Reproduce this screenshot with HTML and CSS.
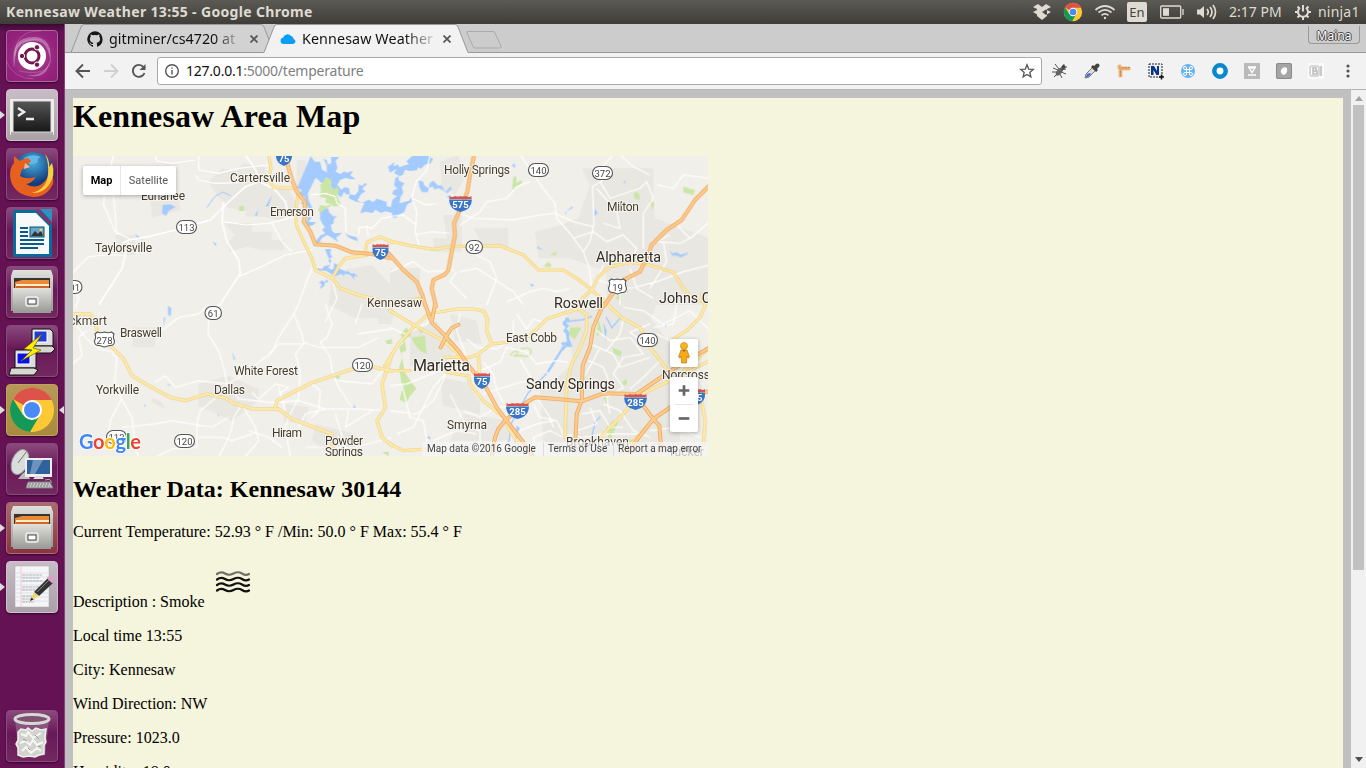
FILE: index.html
```html
<!DOCTYPE html>
<html lang="en">
<head>
<meta charset="utf-8">
<title>Kennesaw Weather 13:55</title>
<link rel="stylesheet" href="styles.css">
</head>
<body>
<div class="desktop">
<header class="panel">
  <span class="panel-title">Kennesaw Weather 13:55 - Google Chrome</span>
  <div class="indicators">
    <svg class="ind" style="width:18px" viewBox="0 0 18 18" fill="#dfdbd2"><path d="M5 1L9 4 5 6.500 0 4zM13 1l5 3-5 2.500L9 4zM0 9l5-2.500L9 9l-4 3zM18 9l-5-2.500L9 9l4 3zM4 4h10v9l-5 4-5-4z"/></svg>
    <svg class="ind" style="width:20px;height:20px" viewBox="0 0 48 48"><use href="#chrome" x="-2" y="-2"/></svg>
    <svg class="ind" style="width:20px" viewBox="0 0 20 18" fill="none" stroke="#dfdbd2" stroke-width="1.700"><path d="M.500 7Q10-1 19.500 7M3.500 9.500q6.500-5.200 13 0M6.500 12.300q3.500-2.700 7 0"/><circle cx="10" cy="15" r="1.200" fill="#dfdbd2" stroke="none"/></svg>
    <span class="lang">En</span>
    <svg class="ind" style="width:24px" viewBox="0 0 24 14" fill="none" stroke="#dfdbd2" stroke-width="1.300"><rect x=".700" y="1" width="20" height="12" rx="1"/><path d="M23 4v6"/><rect x="3" y="3.200" width="6" height="7.600" fill="#dfdbd2" stroke="none"/></svg>
    <svg class="ind" style="width:21px" viewBox="0 0 21 18" fill="none" stroke="#dfdbd2" stroke-width="1.700"><path d="M1 6.500h3L8 3v12l-4-3.500H1z" fill="#dfdbd2" stroke="none"/><path d="M11 6q2.500 3 0 6M14 4q4 5 0 10M17 2q5 7 0 14"/></svg>
    <span class="clock">2:17 PM</span>
    <svg class="ind" style="width:16px" viewBox="0 0 16 16" fill="none" stroke="#dfdbd2"><path d="M5 3.800A5 5 0 1 0 11 3.800" stroke-width="2"/><path d="M8 1v6.500M0 8h3M13 8h3M2.500 13.500L4.500 11.500M13.500 13.500l-2-2M8 13v3M2.500 2.500L4.500 4.500M13.500 2.500L11.500 4.500" stroke-width="2"/></svg>
    <span class="user">ninja1</span>
  </div>
</header>
<div class="workspace">
<nav class="launcher">
  <div class="tile dash"><svg viewBox="0 0 52 52"><g fill="none" stroke="#fff" opacity=".18"><path d="M8 37Q4 6 35 10M13 41Q52 49 43 18M0 31q8 18 28 18M9 26Q9 0 35 1"/></g><path d="M9 36Q2 6 30 7q16 2 14 22Q40 3 16 14 8 20 9 36M20 45q20 2 24-16-2 22-24 16" fill="#fff" opacity=".3"/><circle cx="26" cy="26" r="14" fill="#fff"/><circle cx="26" cy="26" r="7" fill="none" stroke="#77164e" stroke-width="3"/><g fill="#77164e" stroke="#fff" stroke-width="1"><circle cx="16" cy="26" r="2.700"/><circle cx="31" cy="17.300" r="2.700"/><circle cx="31" cy="34.700" r="2.700"/></g></svg></div>
  <div class="tile light running"><svg viewBox="0 0 52 52"><rect x="4" y="10" width="44" height="36" rx="1" fill="#f0f0eb"/><path d="M5 43h42v3H5z" fill="#aaa"/><rect x="7" y="12" width="38" height="31" fill="url(#screen)" stroke="#ddd"/><path d="M12 19l6 4-6 4M20 30h8" fill="none" stroke="#eee" stroke-width="2.500"/></svg></div>
  <div class="tile"><svg viewBox="0 0 52 52"><circle cx="27" cy="25" r="21" fill="url(#globe)"/><path d="M18 10q8-5 17-1-5 2-3 5-9 6-14-4" fill="#63b9e6"/><path d="M8 8l6 5q5-3 8-3l3 3-4 4q-1 3-5 4l-2 7q6 4 16 1-5 7-10 7 10 6 18-2 5-5 4-10 7 4 5 12-6 13-20 13Q5 46 4 27q0-8 4-12z" fill="#e6601f"/><path d="M39 6q5 6 4 13l3-4q4 12-3 22-7 9-17 8 15-4 16-19 1-11-3-20" fill="#f8ce3e"/><path d="M19 15l5 4-6 2z" fill="#f2ba9a"/></svg></div>
  <div class="tile"><svg viewBox="0 0 52 52"><path d="M7 3h29l10 10v37H7z" fill="#086a9d"/><path d="M34 2h12v13z" fill="#3191bc"/><path d="M10 6h20l13 13v28H10z" fill="#f7f8f8"/><path d="M31 3l14 14" stroke="#8b3266" stroke-width="3"/><path d="M14 21h8M14 25h8M14 29h8M14 33h24M14 37h24M14 41h18" stroke="#0a5b88" stroke-width="2"/><rect x="24" y="20" width="14" height="10" fill="#66a9cc" stroke="#075078"/><path d="M25 29l4-5 3 3 3-4 2 6z" fill="#333"/><circle cx="35" cy="23" r="1.500" fill="#ffd33a"/></svg></div>
  <div class="tile"><svg viewBox="0 0 52 52"><use href="#drawer"/></svg></div>
  <div class="tile"><svg viewBox="0 0 52 52"><path d="M26 4h18l3 3v14H26z" fill="#ddd" stroke="#111"/><path d="M28 6h13v11H28z" fill="#223bd9" stroke="#fff"/><path d="M25 21h21l3 3-4 4H25z" fill="#d7d7d1" stroke="#111"/><path d="M9 25h18l3 3v15H9z" fill="#ddd" stroke="#111"/><path d="M11 28h13v11H11z" fill="#0712ee" stroke="#fff"/><path d="M5 43h23l4 2-4 5H3z" fill="#d7d7d1" stroke="#111"/><path d="M36 9L18 24l8 1-11 11 20-11-8-2z" fill="#ffef00" stroke="#665e00" stroke-width=".700"/></svg></div>
  <div class="tile gold running active"><svg viewBox="0 0 52 52"><g id="chrome" transform="translate(2 2)"><circle cx="24" cy="24" r="22" fill="#fcc934"/><path d="M24 24L5 13A22 22 0 0 1 44 14H24z" fill="#dd5349"/><path d="M5 13A22 22 0 0 0 22 46l10-17-8-5-9 5z" fill="#149958"/><circle cx="24" cy="24" r="10" fill="#fff"/><circle cx="24" cy="24" r="8" fill="#4a8af4"/></g></svg></div>
  <div class="tile"><svg viewBox="0 0 52 52"><path d="M16 31l-4 5h12l-4-8" fill="#b9c0bc"/><ellipse cx="14" cy="19" rx="8" ry="13" transform="rotate(22 14 19)" fill="#d9dedb" stroke="#9a9f9b"/><path d="M12 20L21 8" stroke="#777"/><rect x="19" y="15" width="27" height="19" fill="#eee"/><rect x="21" y="17" width="23" height="14" fill="#2f629d"/><path d="M27 17h10l-8 14h-5z" fill="#6d92bd"/><path d="M30 33h6l2 3H27z" fill="#ddd"/><path d="M22 39h22l3 6H20z" fill="#c5cbc8" stroke="#777"/><path d="M23 41h20M22 43h22" stroke="#777" stroke-dasharray="2 1"/><path d="M39 37q7-2 6 3" fill="none" stroke="#aaa"/></svg></div>
  <div class="tile red running"><svg viewBox="0 0 52 52"><g id="drawer"><path d="M7 4h38l2 6v35H5V10z" fill="url(#metal)"/><path d="M8 12h36v12H8z" fill="#353535"/><path d="M9 16l7-2h27v9H9z" fill="#ed8932"/><path d="M10 18h33v2H10z" fill="#fff0ca"/><path d="M10 20h33v3H10z" fill="#d4642b"/><path d="M7 22h38v25H7z" fill="url(#metal)"/><rect x="20" y="31" width="12" height="9" rx="2" fill="#bbb" stroke="#eee" stroke-width="1.500"/><rect x="22" y="33" width="8" height="5" fill="#fff" stroke="#555"/></g></svg></div>
  <div class="tile light running"><svg viewBox="0 0 52 52"><path d="M9 5h34v41H9z" fill="#f5f5f5" stroke="#aaa" stroke-width=".500"/><path d="M10 12h32M10 16h32M10 20h32M10 24h32M10 28h32M10 32h32M10 36h32M10 40h32" stroke="#bfd2e8" stroke-width=".500"/><path d="M15 5v41" stroke="#f2c9d0"/><path d="M16 14h20M16 17h18M16 20h21M16 26h18M16 29h16M16 35h15M16 38h13M16 41h12" stroke="#888" stroke-dasharray="3 .500" stroke-width=".600"/><path d="M28 31l14-14 5 5-14 13z" fill="#333"/><path d="M31 31l12-12" stroke="#888"/><path d="M24 40l4-9 5 4z" fill="#ead878"/><path d="M24 40l1.500-3.500 2 2z" fill="#222"/><path d="M42 17l3-2 3 3-2 3z" fill="#dba0c7" stroke="#dba0c7" stroke-width="2"/></svg></div>
  <div class="tile trash"><svg viewBox="0 0 52 52"><path d="M9 10h34l-4 35q-13 4-26 0z" fill="#9b7894" opacity=".55"/><path d="M12 22l3-3 5 1 2-2 4 3 4-3 5 2 5-1-1 9 1 4-2 3v9l-5 1-4 2-6-1-6 1-5-2v-7l-2-4 2-4z" fill="#d2d2cf" stroke="#f0f0ed" stroke-width="1.500"/><path d="M15 24l5 2 2-4 5 6 8-5M14 33l6-2 4 4 3-5 4 5 6-3M16 41l4-4 5 6 6-5 4 3" stroke="#f6f6f4" fill="none" stroke-width="2"/><path d="M17 29l4 2M29 25l4 4M22 38l2 2M32 36l3 1" stroke="#999"/><ellipse cx="26" cy="9" rx="17" ry="4.500" fill="#7d5171" stroke="#d8d8d3" stroke-width="3"/></svg></div>
</nav>
<main class="browser">
  <div class="tabs">
    <svg class="tab-shapes" viewBox="65 24 1301 29"><path d="M71 52.500L81 27q1-2.500 3-2.500h177q2 0 3 2.500l10 25.500z" fill="#d2d2d2" stroke="#999"/><path d="M65 52.500h1301" stroke="#999"/><path d="M264 52.500L274 27q1-2.500 3-2.500h178q2 0 3 2.500l10 25.500V54H264z" fill="#f2f2f2"/><path d="M264 52.500L274 27q1-2.500 3-2.500h178q2 0 3 2.500l10 25.500" fill="none" stroke="#999"/><path d="M468 31.500h25q1.500 0 2 1.500l6 13q.500 2-1.500 2H475q-1.500 0-2-1.500L467 33q-.500-1.500 1-1.500z" fill="#ccc" stroke="#aaa"/></svg>
    <svg class="favicon" viewBox="0 0 16 16"><path d="M8 .300a8 8 0 0 0-2.500 15.500c.400.100.500-.200.500-.400V14c-2 .500-2.700-.900-2.700-.900-.300-.900-.800-1.200-.800-1.200-.700-.500 0-.500 0-.500.800.100 1.200.800 1.200.800.700 1.200 1.800.900 2.300.700 0-.500.300-.900.500-1.100-1.800-.200-3.600-.900-3.600-4 0-.800.300-1.600.800-2.100 0-.300-.400-1.100.100-2.200 0 0 .700-.200 2.200.800a8 8 0 0 1 4 0c1.500-1 2.200-.800 2.200-.800.500 1.100.100 1.900.100 2.200.500.500.800 1.300.800 2.100 0 3.100-1.900 3.800-3.700 4 .300.200.600.700.600 1.500v2c0 .300.100.500.500.400A8 8 0 0 0 8 .300z" fill="#181616"/></svg>
    <span class="tab-name first">gitminer/cs4720 at</span><svg class="close" viewBox="0 0 8 8"><path d="M.500.500l7 7M7.500.500l-7 7"/></svg>
    <svg class="favicon cloud" viewBox="0 0 16 16"><path d="M3.500 13a3.300 3.300 0 0 1-.300-6.500A4.500 4.500 0 0 1 11 5q2.400.300 2.600 3 1.900.700 1.900 2.600T13 13z" fill="#089ff5"/></svg>
    <span class="tab-name second">Kennesaw Weather</span><svg class="close" viewBox="0 0 8 8"><path d="M.500.500l7 7M7.500.500l-7 7"/></svg>
    <span class="profile">Maina</span>
  </div>
  <div class="toolbar">
    <svg class="nav-icon" viewBox="0 0 16 16"><path d="M15 8H2M8 1.500L1.500 8 8 14.500"/></svg>
    <svg class="nav-icon dim" viewBox="0 0 16 16"><path d="M1 8h13M8 1.500L14.500 8 8 14.500"/></svg>
    <svg class="nav-icon" viewBox="0 0 16 16"><path d="M13.500 10A6 6 0 1 1 12.500 4L14 5.500"/><path d="M14.500 1v6h-6z" fill="#555" stroke="none"/></svg>
    <div class="address"><svg class="info" viewBox="0 0 14 14"><circle cx="7" cy="7" r="6.300"/><path d="M7 6v4.500M7 3.500v1.300"/></svg><span class="url"><b>127.0.0.1</b>:5000/temperature</span><svg class="star" viewBox="0 0 16 16"><path d="M8 1.800l1.700 4.300 4.600.300-3.500 3 1.100 4.500L8 11.400l-3.900 2.500 1.100-4.500-3.500-3 4.600-.300z"/></svg></div>
    <div class="extensions">
      <svg viewBox="0 0 16 16"><ellipse cx="7.500" cy="8.500" rx="2.500" ry="5" transform="rotate(38 7.500 8.500)" fill="#666"/><path d="M1 5l5 2M3 1l4 5M0 9l5 0M2 14l3-3M14 6l-5 1M14 11l-5-2M10 15L8 11M11 5l1-4M11 4l4 0" stroke="#555"/><circle cx="11.500" cy="4" r="2" fill="#444"/></svg>
      <svg viewBox="0 0 16 16"><path d="M1 15l1-4 7-7 3 3-7 7z" fill="#ddd" stroke="#777"/><path d="M2 14l1-3 3-1 1 1-3 3z" fill="#4169df"/><path d="M8 3l5 5" stroke="#333" stroke-width="2.500"/><path d="M11 5l2.500-2.500" stroke="#444" stroke-width="4" stroke-linecap="round"/></svg>
      <svg viewBox="0 0 16 16"><path d="M2 2h3v2h9v3H6v7H3V6H2z" fill="#e4a56d" stroke="#f0bf8e"/><path d="M7 4v1m3-1v1m3-1v1M4 9h1m-1 3h1" stroke="#a76738"/></svg>
      <svg viewBox="0 0 16 16"><rect x="1" y="1" width="13" height="13" fill="#eee" stroke="#222" stroke-dasharray="2 1"/><path d="M3 12V3h3l3 5V3h2v9H8.500L5.500 7v5z" fill="#063688"/><path d="M11 14h5m-2.500-2.500v5" stroke="#111" stroke-width="1.500"/></svg>
      <svg viewBox="0 0 16 16"><circle cx="8" cy="8" r="7" fill="#67b5ec"/><path d="M6.500 6.500h3v3h-3zM6.500 6.500H5A1.500 1.500 0 1 1 6.500 5zM9.500 6.500V5A1.500 1.500 0 1 1 11 6.500zM9.500 9.500H11A1.500 1.500 0 1 1 9.500 11zM6.500 9.500V11A1.500 1.500 0 1 1 5 9.500z" fill="none" stroke="#fff"/></svg>
      <svg viewBox="0 0 16 16"><circle cx="8" cy="8" r="5.700" fill="#fff" stroke="#0888ce" stroke-width="4.500"/></svg>
      <svg viewBox="0 0 16 16"><path d="M0 0h16v16H0z" fill="#bababa"/><path d="M4 4h8M4 12h8M5 5h6L8 9.500z" fill="none" stroke="#fff" stroke-width="1.300"/></svg>
      <svg viewBox="0 0 16 16"><rect width="16" height="16" rx="2" fill="#898989"/><rect x="1" y="1" width="14" height="14" rx="2" fill="#a5a5a5"/><path d="M5 7q2-4 6-2 1 5-3 7-4-1-3-5z" fill="#fff"/></svg>
      <svg viewBox="0 0 16 16"><path d="M0 0h16v16H0z" fill="#fafafa"/><rect x="2" y="3" width="9" height="10" rx="2" fill="none" stroke="#ccc" stroke-width="1.500"/><path d="M5 5h3v3H5zm0 3h4v3H5zM13 3v10" fill="none" stroke="#bbb" stroke-width="1.500"/></svg>
      <svg class="more" viewBox="0 0 16 16" fill="#555"><circle cx="8" cy="3" r="1.600"/><circle cx="8" cy="8" r="1.600"/><circle cx="8" cy="13" r="1.600"/></svg>
    </div>
  </div>
  <div class="viewport">
    <article class="page">
      <h1>Kennesaw Area Map</h1>
      <div class="map">
        <svg class="map-art" viewBox="0 0 635 300">
        <defs>
          <linearGradient id="screen" x2="0" y2="1"><stop stop-color="#565656"/><stop offset="1" stop-color="#171717"/></linearGradient>
          <linearGradient id="metal" x2="0" y2="1"><stop stop-color="#e0e0dd"/><stop offset="1" stop-color="#989894"/></linearGradient>
          <radialGradient id="globe" cy=".25"><stop stop-color="#4ab0df"/><stop offset="1" stop-color="#133c7f"/></radialGradient>
          <g id="yellow">
            <path d="M590 0L597 40 590 75 605 97 665 100M678 115L670 180 675 215 700 270 720 310 730 345 780 370 805 400 860 420 960 445M780 370L800 335 820 310 885 300M880 290L885 262 925 245 960 262"/>
            <path transform="translate(954 0)" d="M-5 257L60 272 130 283 180 275 330 272 400 300 445 345 520 345 560 370 605 405 655 450M555 450L605 405 625 365 660 335 720 322 770 328 850 352 880 400 905 430 940 440M0 450L90 430"/>
            <path transform="translate(0 447)" d="M0 30L55 30 68 50 75 80 120 130 155 165 180 215 230 245 295 280 340 290 405 270 460 282 485 298 545 315 620 315 660 345 780 390 785 470M608 315L615 290 715 238 840 195M905 190L960 200M960 150L930 240 940 310 915 350 930 400 960 425"/>
            <path transform="translate(954 447)" d="M0 20L75 65 160 110 220 165M-15 185L25 120 75 65 115 30 200 15 250 15 282 22 292 45 290 80 305 120 350 115 420 95 470 45 530 25 565 15 590 30 590 80 570 130 545 180 530 240 525 400M-5 200L60 200M165 160L240 160 265 150 305 120M265 150L268 205M170 205L235 215 240 240 280 290 340 340 360 380 385 420M650 0L700 45 750 70 780 130 830 195M935-30L945 5 930 40 890 80 850 105M625 405L700 330 745 275 840 230 960 170M870 210L960 130M0 420L40 440 110 435M930 260L945 350 940 420M690 459L740 400 790 345"/>
          </g>
          <g id="orange">
            <path d="M640 0L650 40 660 75 675 110 698 140 700 180 695 200 715 230 730 268 790 272 840 292 900 297 955 310"/>
            <path transform="translate(954 0)" d="M-4 295L40 345 80 380 97 420 105 450M252 0L240 60 232 110 205 175 192 205 195 240 185 290 175 345 165 358 130 375 125 400 138 455M960 90L915 135 875 195 830 225 785 270 770 310 750 350 700 375 665 420 640 455"/>
            <path transform="translate(954 447)" d="M105 0L125 55 165 95 205 140 240 190 285 245 320 310 350 350 400 415 430 460M135 0L125 55M205 62L185 72 170 95 152 130M305 459L315 400 325 375 345 350 375 325 410 295 435 280 500 285 575 292 640 268 740 270 850 195 960 130M640 0L610 70 600 130 578 185 575 290 560 330 555 430M720 270L760 305 790 345 808 365 814 440M715 440L790 345 870 290 960 260"/>
          </g>
        </defs>
        <path d="M0 0h635v300H0z" fill="#f0efea"/>
        <g transform="scale(.333333) translate(-3 -3)">
          <g class="urban">
            <path d="M410 80l40-40 40 8 28-25 62 15 5 60 65 5 30 55-60 40-90-30-60-8-40-45zM675 15h25l15 60-22 50-20-15zM515 135l80 0 8 50-80 0zM455 205h85v25h60v25h35v30h-65l-45-10-55 15v-30l20-20zM235 135l85-10 5 40-85 25zM780 350l120-20 65 70v90H850l-80-40zM130 240h60v60h-50z"/>
            <path transform="translate(954 0)" d="M160 180h55v110h-85v-40h40zM575 40h215v90l5 60 165 60v200H800l-40 90-110-60V350l-110-40h-95l-10-80 80-20 50-20 35-100zM250 220h105v60h-70zM0 340h90v110H0zM150 20l55-20 20 70-30 50-40-25z"/>
            <path transform="translate(0 447)" d="M182 70h68v60h-68zM380 240l90-25 90 40 0 35-80 60-100-45zM730 360l120 30 10 50-80 19-60-50zM640 300l70 10-10 45-65 0zM920 0h40v60h-40zM240 280l30 15 10 20-40-20z"/>
            <path transform="translate(954 447)" d="M530 30L630 0h120l60 80 60 70v300H550l-90-40-10-150 100-80zM60 80l80-30 55 90-50 60-85-15zM150 220l80 15 40 60 0 35-110-25zM220 330l140 20 0 60-180 0zM180 30l80 20 15 70-80-10z"/>
          </g>
          <g class="water">
            <g transform="translate(684 0)">
              <path d="M32 3l12 17 16 0 6 24 14 8 0-22-10-18 10 3 4 14 10-5-1-18 24 0-10 12 5 20-5 12 14 7 12-8 6 4 20-6-8 14 16 12-15 0-16-4-16 6-8 15 12 14 11-8 12 4 3 18 15 3 10-13 1-20 10 5 10-10 5 5-14 12 9 10-12 6-12 20 13 8 20-10 15 7 10-10 20 6 10 4 0 12 12 4 5-22 14-12-14-5 3-12 12-5-10-10 4-22 12-6-16-8 8-14-20 12-6-18 20-14-5 12 16-4 2 8 30-10-8-8 18-16-3-6 15-3 40 0 3 15 8 2-8 14-17 4-12 12-10-4-2 9-22 2-14-4-6 15-14 6 2 12 16 8-8 12 5 16-8 12-4 20 30-8 5-10 10 8-22 14-8 22-18 9-8 10-12-4 2-12-20-5-15 5-15-10-10 10-20-4-16 5 5-15 7-15-25-5-22-10 3-14-10 3-6-9-10 18-20-20-12-14-6 10-8-16-15-6-14-14-5 8-20 40 3 20 10 20-14 20 12 13-8 12 22 0-7 8-18 6-12-8 12-14 0-15-16-3 5-6 17-3-8-14-22-8 20-5-7-15-20-4 14-14-14-8z"/>
              <path d="M60 165l12-5 12 0 4 13 14 12 10-4-10 12-2 14-8 2 4 18 8 8 22-2-10 9-8 6 8 14-18-12-16-10-16 8-10 18-10 0 8 6-10 0-4-4 20-26 16-7-10-10 8-8-8-14-6-10zM62 230l18 0M136 234l10 7 24 6 3 12-20-8-10-6zM75 282l18 0-2 14 6 10-12 8 6 16-6 8 10 6 6-4 1-16 12 6-4 10 12 2 16 8 6-2 10 8 8-2 13 12-13-4 2 12-14-15-16-3-2 8-8-8-18 8-12-6-15-10-20-2-10 8 5-15 12 4 7-10 15-2 6-14-10-10zM54 382l8 0 1-7 10 6 8-8 4 10-10-2-2 12-14 10 6-15z"/>
            </g>
            <path d="M272 150l-2 25 12 8 8-15 20-12-15-8zM580 155l20-34-10 32zM548 182l10-18-3 18zM188 235l20 17 10 5-24-10zM422 260l10 5v10z"/>
            <path d="M405 158l22-32 25-15 25 12" fill="none" stroke="#a4cbff" stroke-width="3"/>
            <path transform="translate(954 0)" d="M86 77l14 3 2 10 14 10 3-15 10-8 15 15 10-2 13 20 15-15 4 6-15 14-12-10-15-6-10 5-6-10-12 5-2 12-18 0-8-15zM365 30l10-5v15zM545 155l5 3-20 10zM700 80l5-3v10zM525 170l5 3-3 5zM615 160l8 15-12 10zM445 275l14 10-20-6zM838 285l10 10 12-4 10 8 18-4 6-4-3 8-20 8-12-5-12 0zM420 385l14 6-10 4zM180 120l5 15-15-10z"/>
            <path transform="translate(0 447)" d="M288 5l10 8-2 24-8-5 0-15zM275 40l5 2-5 22zM480 142l10 24-5 0zM217 300l5 5-5 3zM437 328l7 10-8-6zM847 303l5 8h-10zM288 240l10 2-10 3z"/>
            <path transform="translate(1284 450)" d="M188 50l8-5 0-8 10 2 4 8-12 7 10 7-8 10 10 12-3 15 8 20 2 8-18 0-10 12-4-7 12-9-12-2-2-7 18-3-4-24-8-8 8-10-9-10zM190 120l5 4-48 78-7-3z"/>
            <path d="M1484 500l48-6 28-10M1602 486l18 32 24-28M1424 655l-55 58-50 90-13 90M1558 850l12-50 15-15" fill="none" stroke="#a4cbff" stroke-width="4"/>
            <path transform="translate(954 447)" d="M380 365l10 8-8 12-5 35-4 0zM640 55l10 25-3 30zM108 400l10-4 5 10zM825 60l8 3-8 7z"/>
          </g>
          <g class="park">
            <path d="M760 65l18 10 0 20 6 8 14-8 2 15-5 10 12 30-20 5-12-8-15-5 3-12-16-3-5-10 5-10-2-18 10-10zM745 150l18 4 12-6 3 4-22 12-8 9-10-5zM501 153h15v15h-15z"/>
            <path transform="translate(954 0)" d="M370 65l10 0-2 20 14-10 4 8-10 10-20 12zM880 95l35 10-5 15-30-8zM733 110l15 5 2 20-18-5zM778 135l15 10-5 20zM460 335l15-15 10 10-5 8zM480 300l20-12-2 12zM675 430l18-18 0 25z"/>
            <path transform="translate(954 447)" d="M50 70l-18 20 10 25-15 15 10 30-10 30 10 65-8 32 20 10 10-20 20-22-35-50-10-60 15-5-5-35 20-10zM65 100l40-5 5 55-20-10-20-25zM85 70l18 10-12 10zM540 70l35 0-20 35-16-10zM695 235l14-10 3 15-10 5zM640 280h15l-5 20zM650 370l20-20 15 5-28 60zM700 400l70 20-70 15zM625 45l12 40-18 10zM667 130l28 12-2 15-22-8z"/>
            <path transform="translate(954 447)" d="M360 155q15-20 25-12l-8 12 22 0M392 135q30-8 32 8-5 20-30 12M370 155l25-2" fill="none" stroke="#cbe5a6" stroke-width="4"/>
            <path transform="translate(0 447)" d="M785 215l20 0-5 10-15-4zM940 110l20-5v15h-15zM930 445l20-2v14z"/>
          </g>
          <g class="minor">
            <path d="M150 265L170 255 230 245 310 225 415 195 460 150 520 95 560 80 600 50M455 140L450 200 465 260 500 315 505 355 440 455M170 260L150 340 125 380 80 450M520 0L545 35 570 85 605 100 640 140 650 185 675 190" stroke-width="5"/>
            <path d="M370 60L380 75 430 85 520 82M30 110L100 80 95 150 130 230 180 255M125 0L115 40 125 130 130 180 135 240M250 0L255 18 300 25 370 15M380 0V45L440 55 500 40 590 30M500 365L580 330 640 300 720 285M720 340L700 390 680 445M455 200L520 210 590 205 650 190M600 205L630 260 660 290M0 355L50 305 100 300 160 300M0 365L20 430 10 460M715 120L760 115 790 125 795 145 820 160 822 230M860 240L862 218 885 215 900 220 930 190 958 185M780 370L795 430 760 500M885 215L888 245"/>
            <path transform="translate(954 0)" d="M390 0L430 55 455 95 495 145 500 190 540 235 580 290 598 340 605 405M670 0L635 35 640 75 607 95 612 205 600 260 580 290M120 0L110 45 78 80 65 130 80 170 75 230 90 280M65 130L110 150 140 145M-5 185L40 180 80 210M205 175L250 190 370 195 450 180 495 175 550 200 610 215M210 210L270 170 290 140 350 130 380 95 420 80M630 80L660 130 750 100 770 80 790 130 760 175 760 280M800 90L850 100 880 60 960 70M690 0L730 35 780 60M75 240L125 230 180 235M620 100L680 170 690 220 640 205M550 250L610 230 650 260 700 240 740 280 720 330M840 240L800 260 870 265 910 245M200 350L180 380 230 430M210 350L260 340 370 410 400 450M0 350L70 320 110 350 190 345M350 440L420 410 460 400 500 410 540 400M640 330L620 375 720 400 800 380 880 350 960 330M820 260L830 320 780 400M850 200L900 250 960 200M290 450L320 370 300 320 260 300M690 380V450M720 340L740 400 790 430"/>
            <path transform="translate(0 447)" d="M0 45L40 100 80 135 130 145M120 150L135 160 128 230 148 285 115 350 105 430M148 285L180 340 190 430 200 459M440 0L410 50 408 90 440 140 455 190 465 240 500 285 610 297M410 0L380 30 320 40 270 80 240 100M465 240L510 215 560 175 600 145 620 100 665 30 680 0M665 30L690 90 695 120 670 150 685 200 680 280 650 340 640 370 655 459M760 0L780 60 765 100 745 115 775 160 780 200 800 250 840 310M620 270L650 250 610 240 560 285 540 265M695 115L740 130 860 130 920 100M590 150L620 120 695 120M510 300L485 340 480 370 470 400 440 459M430 282L385 320 375 355 375 430 300 435 250 459M470 340L420 370 300 350 250 360 150 370M515 310L550 370 560 410 520 459M465 240L380 230 310 250 280 215 250 235M610 295L680 290 760 315 850 315 940 320M720 340L740 320 745 260 720 240M850 60L870 0M855 90L960 75M800 230L900 240 940 190M0 180L30 155 20 100 45 80M375 400L450 400 480 410 540 390M530 380L590 400 630 430M620 250L640 320M680 370L700 330 760 315M830 320L820 370 900 320M790 330L830 459M700 430L850 430 960 400"/>
            <path transform="translate(954 447)" d="M0 70L45 90 110 60 150 20M0 245L50 240 110 215 160 195 230 210M35 240L60 340 100 350 120 459M0 320L80 330 130 290 150 250 170 205M170 205L130 250 100 310 70 370 20 390M230 160L200 80 210 30M270 200L330 175 350 130 410 145 440 180 500 170 535 175M230 105L260 130 320 135 370 100 370 50M380 30L410 75 430 45 460 55M280 270L390 235 430 230 410 200 390 165M340 295L320 260 310 210 280 175M430 300L450 340 500 350 520 390 580 400 640 390M440 280L480 340 490 370M180 270L230 370 270 380 270 459M220 320L270 340 320 310 370 305M130 410L200 380 260 390M620 80L660 110 720 100 760 150 700 160 670 210 700 250 650 280 660 330M600 120L670 150 690 190 780 160M595 170L640 190 660 240 610 235M700 45L690 90 650 140M780 60L720 85 780 130M640 300L690 320 730 380 780 400M575 330L630 320 660 370 700 370M580 220L610 170 630 130M700 10L760 20 820 60 900 20 960 80M850 115L800 90M810 170L760 220 720 255M440 459L430 400 480 380 520 400M390 380L440 360 490 350M600 310L620 360 560 380M600 415L650 390 750 390M780 380L860 370 930 400M860 0L850 60 790 70"/>
          </g>
          <use href="#yellow" class="yellow-edge"/><use href="#yellow" class="yellow-fill"/>
          <use href="#orange" class="orange-edge"/><use href="#orange" class="orange-fill"/>
        </g>
        <g transform="translate(-73 -156)">
          <g class="place">
            <text x="230" y="182" textLength="60">Cartersville</text><text x="141" y="200" textLength="44">Euharlee</text><text x="270" y="216" textLength="44">Emerson</text><text x="95" y="252" textLength="57">Taylorsville</text><text x="367" y="307" textLength="55">Kennesaw</text><text x="444" y="174" textLength="66">Holly Springs</text><text x="607" y="211" textLength="32">Milton</text><text x="506" y="342" textLength="51">East Cobb</text><text x="662" y="379" textLength="48">Norcross</text><text x="447" y="429" textLength="40">Smyrna</text><text x="566" y="446" textLength="63">Brookhaven</text><text x="325" y="445" textLength="38">Powder</text><text x="325" y="456" textLength="38">Springs</text><text x="272" y="437" textLength="30">Hiram</text><text x="214" y="394" textLength="31">Dallas</text><text x="234" y="375" textLength="64">White Forest</text><text x="96" y="394" textLength="43">Yorkville</text><text x="120" y="337" textLength="42">Braswell</text><text x="107" y="325" text-anchor="end">Rockmart</text><text x="668" y="456">Tucker</text>
            <text class="city" x="596" y="262" textLength="65">Alpharetta</text><text class="city" x="554" y="308" textLength="49">Roswell</text><text class="city" x="659" y="303">Johns Creek</text><text class="city" x="526" y="389" textLength="89">Sandy Springs</text><text class="metro" x="413" y="371" textLength="57">Marietta</text>
          </g>
          <g class="route">
            <rect x="176.500" y="220.500" width="20" height="13" rx="6.500"/><rect x="63" y="280.500" width="19" height="13" rx="6.500"/><rect x="205" y="306.500" width="16.500" height="13" rx="6.500"/><rect x="352.500" y="358.500" width="20" height="13" rx="6.500"/><rect x="174.500" y="434.500" width="20" height="13" rx="6.500"/><rect x="106.500" y="430.500" width="20" height="13" rx="6.500"/><rect x="528.500" y="163.500" width="20" height="13" rx="6.500"/><rect x="592.500" y="166.500" width="20" height="13" rx="6.500"/><rect x="466" y="240.500" width="16.500" height="13" rx="6.500"/><rect x="637.500" y="333.500" width="20" height="13" rx="6.500"/>
            <path d="M95 334l2.500-2q3 1.500 7 0 4 1.500 7 0l2.500 2q-1.500 3 .500 7 0 5-5 4.500l-5 1.500-5-1.500q-5 .500-5-4.500 2-4 .500-7zM609 281l2.500-2q3 1.500 6 0 3 1.500 6 0l2.500 2q-1.500 3 .500 7 0 5-5 4.500l-4 1.500-4-1.500q-5 .500-5-4.500 2-4 .500-7z"/>
            <text x="186.500" y="230.500">113</text><text x="72" y="290.500">101</text><text x="213.200" y="316.500">61</text><text x="362.500" y="368.500">120</text><text x="184.500" y="444.500">120</text><text x="116.500" y="440.500">113</text><text x="538.500" y="173.500">140</text><text x="602.500" y="176.500">372</text><text x="474.200" y="250.500">92</text><text x="647.500" y="343.500">140</text><text x="104.500" y="343.500">278</text><text x="617.500" y="290.500">19</text>
          </g>
          <g class="interstate">
            <g transform="translate(284 158)"><path class="cap" d="M-8-8q3 2 4.500 0 2 1 3.500 0 1.500 1 3.500 0 2 2 4.500 0v3H-8z"/><path d="M-8-4.500H8Q9 5 0 8-9 5-8-4.500z"/><text y="4">75</text></g>
            <g transform="translate(380.500 252)"><path class="cap" d="M-8-8q3 2 4.500 0 2 1 3.500 0 1.500 1 3.500 0 2 2 4.500 0v3H-8z"/><path d="M-8-4.500H8Q9 5 0 8-9 5-8-4.500z"/><text y="4">75</text></g>
            <g transform="translate(482 381)"><path class="cap" d="M-8-8q3 2 4.500 0 2 1 3.500 0 1.500 1 3.500 0 2 2 4.500 0v3H-8z"/><path d="M-8-4.500H8Q9 5 0 8-9 5-8-4.500z"/><text y="4">75</text></g>
            <g transform="translate(460.500 204)"><path class="cap" d="M-11-8q3 2 5.500 0 3 1 5.500 0 2.500 1 5.500 0 3 2 5.500 0v3h-22z"/><path d="M-11.500-4.500h23Q11 6 0 8-11 6-11.500-4.500z"/><text y="4">575</text></g>
            <g transform="translate(517.500 411)"><path class="cap" d="M-11-8q3 2 5.500 0 3 1 5.500 0 2.500 1 5.500 0 3 2 5.500 0v3h-22z"/><path d="M-11.500-4.500h23Q11 6 0 8-11 6-11.500-4.500z"/><text y="4">285</text></g>
            <g transform="translate(635.500 402)"><path class="cap" d="M-11-8q3 2 5.500 0 3 1 5.500 0 2.500 1 5.500 0 3 2 5.500 0v3h-22z"/><path d="M-11.500-4.500h23Q11 6 0 8-11 6-11.500-4.500z"/><text y="4">285</text></g>
            <g transform="translate(697 397)"><path class="cap" d="M-8-8q3 2 4.500 0 2 1 3.500 0 1.500 1 3.500 0 2 2 4.500 0v3H-8z"/><path d="M-8-4.500H8Q9 5 0 8-9 5-8-4.500z"/><text y="4">85</text></g>
          </g>
          <text class="brand" x="79" y="449" textLength="62"><tspan fill="#4285f4">G</tspan><tspan fill="#ea4335">o</tspan><tspan fill="#fbbc05">o</tspan><tspan fill="#4285f4">g</tspan><tspan fill="#34a853">l</tspan><tspan fill="#ea4335">e</tspan></text>
        </g>
        </svg>
        <div class="map-type"><b>Map</b><span>Satellite</span></div>
        <div class="pegman"><svg viewBox="0 0 14 22"><circle cx="7" cy="4" r="3.500" fill="#fbb51d" stroke="#cb8a16" stroke-width=".700"/><path d="M4 8h6l2.500 7-1.500 1-1-2-.500 7H4.500L4 14l-1 2-1.500-1z" fill="#f7ab18" stroke="#bd7d12" stroke-width=".700"/><path d="M5 8l2 2 2-2" fill="#a66b10"/></svg></div>
        <div class="zoom"><svg viewBox="0 0 28 28"><path d="M8.500 14h11M14 8.500v11"/></svg><i></i><svg viewBox="0 0 28 28"><path d="M8.500 14h11"/></svg></div>
        <div class="credits"><span class="c-data">Map data ©2016 Google</span><span class="c-terms">Terms of Use</span><span class="c-report">Report a map error</span></div>
      </div>
      <h2>Weather Data: Kennesaw 30144</h2>
      <p>Current Temperature: 52.93 ° F /Min: 50.0 ° F Max: 55.4 ° F</p>
      <p>Description : Smoke <svg class="smoke" viewBox="0 0 50 50"><path d="M8 17q4-3 8-.500t8.500 0 8.500 0 7 .500" opacity=".58"/><path d="M8 22.500q4-3 8-.500t8.500 0 8.500 0 7 .500M8 28q4-3 8-.500t8.500 0 8.500 0 7 .500M8 33.500q4-3 8-.500t8.500 0 8.500 0 7 .500"/></svg></p>
      <p>Local time 13:55</p>
      <p>City: Kennesaw</p>
      <p>Wind Direction: NW</p>
      <p>Pressure: 1023.0</p>
      <p>Humidity: 18.0</p>
    </article>
    <div class="scrollbar"><span class="arrow"></span><span class="thumb"></span><span class="arrow down"></span></div>
  </div>
</main>
</div>
</div>
</body>
</html>
```

FILE: styles.css
```css
* { box-sizing: border-box; }
body { margin: 0; overflow: hidden; }
svg { display: block; }
.desktop { width: 1366px; height: 768px; display: flex; flex-direction: column; overflow: hidden; }
.panel { height: 24px; flex: none; display: flex; justify-content: space-between; align-items: center; padding: 0 5px 0 6px; background: linear-gradient(#5b5a54, #3e3d39); color: #dfdbd2; font: 14px/24px "Noto Sans", sans-serif; }
.panel-title { font-weight: 700; font-size: 14px; letter-spacing: .34px; white-space: nowrap; }
.indicators { display: flex; align-items: center; }
.ind { height: 18px; margin-right: 12px; }
.lang { width: 20px; height: 20px; margin-right: 13px; border-radius: 2px; background: #dfdbd2; color: #44433f; text-align: center; line-height: 20px; font-size: 13px; }
.clock { width: 53px; margin-right: 13px; font-size: 14px; white-space: nowrap; }
.user { width: 42px; margin-left: -5px; margin-right: 1px; white-space: nowrap; letter-spacing: .2px; }
.indicators > :first-child { margin-left: -2px; }
.workspace { display: flex; flex: 1; min-height: 0; }
.launcher { width: 65px; flex: none; display: flex; flex-direction: column; gap: 7px; padding: 6px 0 6px 6px; background: linear-gradient(#3b0a31, #651254 8px); border-right: 1px solid #87437a; }
.tile { position: relative; width: 52px; height: 52px; flex: none; border-radius: 4px; border: 1px solid #8a4a7e; background: linear-gradient(#8a4a7d, #681858 45%, #73285f); box-shadow: 0 1px 2px #340629; }
.tile svg { width: 52px; height: 52px; margin: -1px; }
.tile.dash { background: radial-gradient(#ac4c94, #95227d 70%, #8b1f74); border-color: #b066a0; }
.tile.light { background: linear-gradient(#c8bdc6, #aaa0aa); border-color: #cfc4ce; }
.tile.gold { background: linear-gradient(#b79859, #a88b3e); border-color: #c0a45e; }
.tile.red { background: linear-gradient(#a86a70, #8a3440); border-color: #b06a72; }
.tile.running::before { content: ""; position: absolute; left: -7px; top: 21px; border: 4px solid transparent; border-left: 5px solid #ddd; border-right: 0; }
.tile.active::after { content: ""; position: absolute; right: -7px; top: 21px; border: 4px solid transparent; border-right: 5px solid #ddd; border-left: 0; }
.tile.trash { margin-top: auto; }
.browser { flex: 1; min-width: 0; display: flex; flex-direction: column; background: #f2f2f2; }
.tabs { position: relative; height: 29px; flex: none; display: flex; align-items: center; padding-left: 22px; background: #ccc; font: 14.3px/28px "Noto Sans", sans-serif; color: #111; }
.tabs > * { position: relative; }
.tabs .tab-shapes { position: absolute; inset: 0; width: 1301px; height: 29px; }
.favicon { width: 16px; height: 16px; }
.tab-name { margin-left: 6px; white-space: nowrap; overflow: hidden; color: transparent; background-clip: text; -webkit-background-clip: text; height: 28px; }
.first { width: 130px; background-image: linear-gradient(90deg, #111 105px, #aaa 128px); }
.second { width: 131px; letter-spacing: .1px; background-image: linear-gradient(90deg, #111 103px, #ccc 131px); }
.close { width: 8px; height: 8px; margin-left: 11px; fill: none; stroke: #555; stroke-width: 1.7; }
.second + .close { margin-left: 10px; }
.cloud { margin-left: 22px; }
.profile { width: 52px; height: 18px; margin: -8px 6px 0 auto; border: 1px solid #999; border-top: 0; border-radius: 0 0 4px 4px; text-align: center; font-size: 12px; line-height: 19px; color: #fff; text-shadow: 1px 0 #444, -1px 0 #444, 0 1px #444, 0 -1px #444; }
.toolbar { height: 37px; flex: none; display: flex; align-items: center; padding-left: 10px; border-bottom: 1px solid #b6b6b6; }
.nav-icon { width: 16px; height: 16px; margin-right: 12px; fill: none; stroke: #555; stroke-width: 1.9; }
.dim { stroke: #d0d0d0; }
.address { width: 885px; height: 28px; margin-left: -2px; display: flex; align-items: center; background: #fff; border: 1px solid #aaa; border-radius: 3px; padding: 0 6px 0 7px; }
.info { width: 14px; height: 14px; fill: none; stroke: #555; stroke-width: 1.4; }
.url { margin: 0 auto 0 7px; font: 14px/24px "Noto Sans", sans-serif; color: #808080; letter-spacing: -.23px; }
.url b { font-weight: 400; color: #111; }
.star { width: 16px; height: 16px; fill: none; stroke: #555; stroke-width: 1.3; }
.extensions { display: flex; gap: 16px; margin-left: 10px; }
.extensions svg { width: 16px; height: 16px; overflow: visible; }
.viewport { flex: 1; min-height: 0; display: flex; background: #c0c0c0; }
.page { flex: 1; margin: 8px 8px 0; background: #f5f4dc; color: #000; font: 16px "Liberation Serif", serif; overflow: hidden; }
.page h1 { font-size: 32px; margin: 0 0 21px; line-height: 37px; letter-spacing: .1px; }
.page h2 { font-size: 24px; line-height: 27px; margin: 20px 0; }
.page p { margin: 16px 0; line-height: 18px; }
.smoke { display: inline-block; width: 50px; height: 50px; vertical-align: baseline; fill: none; stroke: #111; stroke-width: 2.2; stroke-linecap: round; }
.scrollbar { width: 15px; flex: none; background: #f1f1f1; display: flex; flex-direction: column; align-items: center; padding: 6px 0; }
.arrow { border: 4px solid transparent; border-bottom: 5px solid #a3a3a3; border-top: 0; }
.thumb { width: 11px; height: 465px; margin-top: 4px; background: #c1c1c1; }
.down { margin-top: auto; transform: rotate(180deg); border-bottom-color: #505050; }
.map { position: relative; width: 635px; height: 300px; overflow: hidden; font-family: Roboto, sans-serif; }
.map-art { width: 635px; height: 300px; }
.urban { fill: #e8e5df; opacity: .8; }
.water { fill: #a4cbff; }
.park { fill: #cbe5a6; }
.minor { fill: none; stroke: #fff; stroke-width: 3.6; stroke-linejoin: round; }
.yellow-edge, .yellow-fill, .orange-edge, .orange-fill { fill: none; stroke-linecap: round; stroke-linejoin: round; }
.yellow-edge { stroke: #ecd28a; stroke-width: 9.5; }
.yellow-fill { stroke: #ffe9a6; stroke-width: 6; }
.orange-edge { stroke: #ecab68; stroke-width: 12; }
.orange-fill { stroke: #ffcb8b; stroke-width: 7; }
.place text { font-size: 12px; fill: #443d32; paint-order: stroke; stroke: #f7f5ef; stroke-width: 2px; }
.place .city { font-size: 14.3px; fill: #302b25; }
.place .metro { font-size: 16px; fill: #302b25; }
.route { fill: #fff; stroke: #555; stroke-width: 1.1; }
.route text { font-size: 9.5px; text-anchor: middle; fill: #444; stroke: none; }
.interstate path { fill: #3976c8; }
.interstate .cap { fill: #d65451; }
.interstate text { font: 700 9.5px Roboto, sans-serif; text-anchor: middle; fill: #fff; }
.brand { font: 700 20px Lato, sans-serif; stroke: #fff; stroke-width: 1.5px; paint-order: stroke; }
.map-type { position: absolute; left: 10px; top: 10px; height: 29px; display: flex; background: #fff; border-radius: 2px; box-shadow: 0 1px 4px rgba(0,0,0,.3); font-size: 11px; line-height: 29px; }
.map-type b { width: 38px; text-align: center; font-weight: 700; color: #000; border-right: 1px solid #e6e6e6; }
.map-type span { width: 55px; text-align: center; color: #565656; }
.pegman, .zoom { position: absolute; left: 597px; width: 28px; background: #fff; border-radius: 2px; box-shadow: 0 1px 4px rgba(0,0,0,.3); }
.pegman { top: 183px; height: 28px; padding: 3px 7px; }
.pegman svg { width: 14px; height: 22px; }
.zoom { top: 221px; height: 55px; }
.zoom svg { width: 28px; height: 27px; stroke: #666; stroke-width: 2.8; }
.zoom i { display: block; height: 1px; margin: 0 5px; background: #e6e6e6; }
.credits { position: absolute; right: 0; bottom: 0; height: 14px; display: flex; background: rgba(245,245,245,.72); font-size: 10px; line-height: 14px; color: #444; white-space: nowrap; }
.credits span { padding: 0 5px 0 5px; }
.c-data { width: 121px; }
.c-terms { width: 70px; border-left: 1px solid #ddd; text-indent: -1px; }
.c-report { width: 95px; border-left: 1px solid #ddd; text-indent: -1px; }
```
